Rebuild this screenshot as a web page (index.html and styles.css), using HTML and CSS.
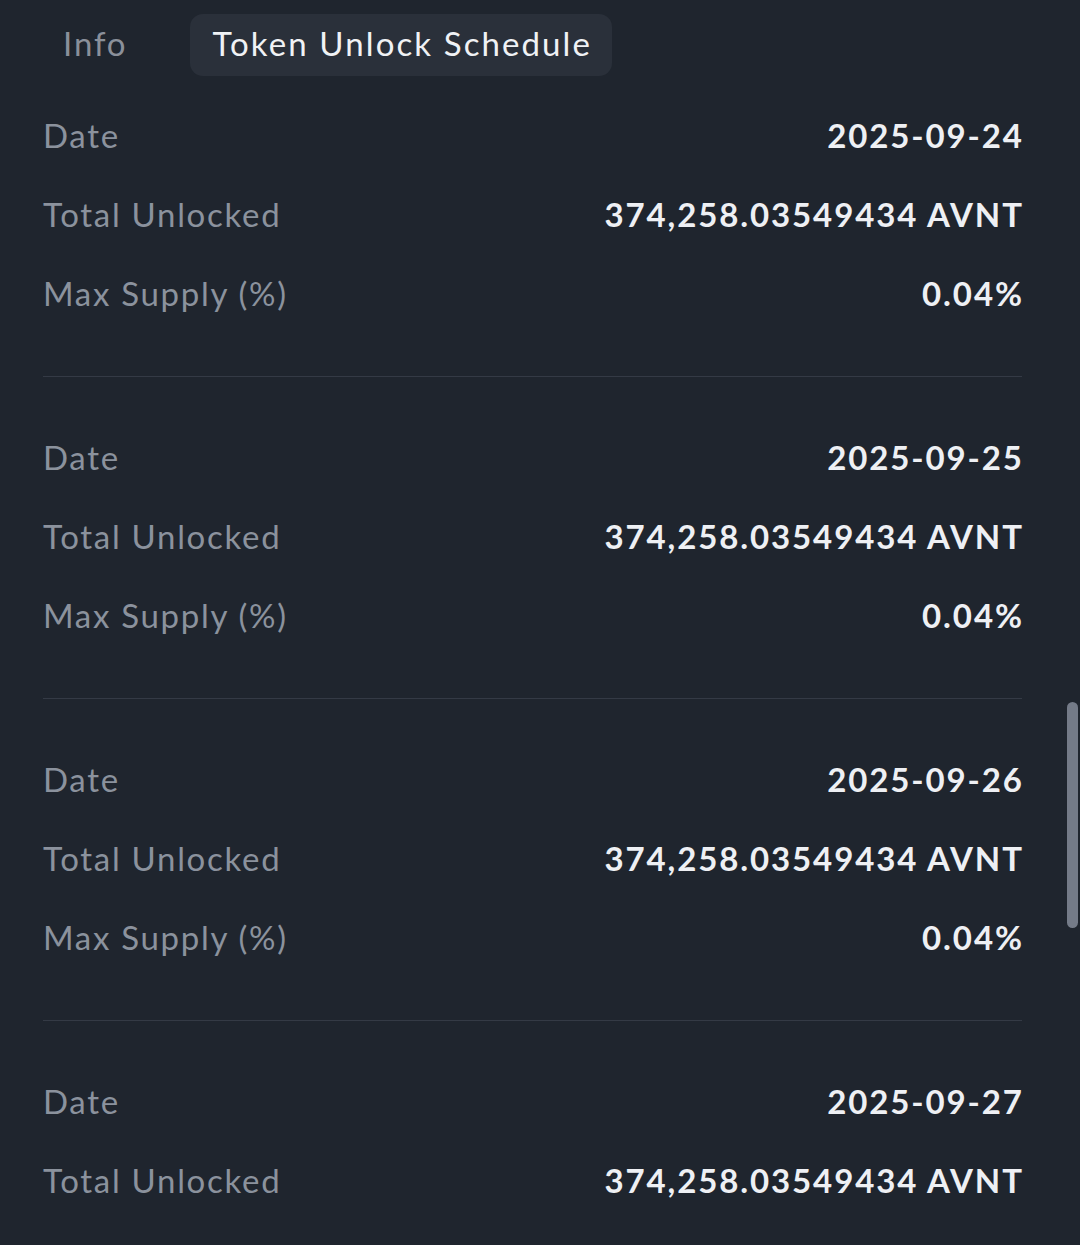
FILE: index.html
```html
<!DOCTYPE html>
<html>
<head>
<meta charset="utf-8">
<link rel="stylesheet" href="styles.css">
</head>
<body>
<div class="page">
  <nav class="tabs">
    <div class="tab">Info</div>
    <div class="tab active">Token Unlock Schedule</div>
  </nav>
  <div class="list">
    <section class="group">
      <div class="row"><span class="label">Date</span><span class="value">2025-09-24</span></div>
      <div class="row"><span class="label">Total Unlocked</span><span class="value">374,258.03549434 AVNT</span></div>
      <div class="row"><span class="label">Max Supply (%)</span><span class="value">0.04%</span></div>
    </section>
    <section class="group">
      <div class="row"><span class="label">Date</span><span class="value">2025-09-25</span></div>
      <div class="row"><span class="label">Total Unlocked</span><span class="value">374,258.03549434 AVNT</span></div>
      <div class="row"><span class="label">Max Supply (%)</span><span class="value">0.04%</span></div>
    </section>
    <section class="group">
      <div class="row"><span class="label">Date</span><span class="value">2025-09-26</span></div>
      <div class="row"><span class="label">Total Unlocked</span><span class="value">374,258.03549434 AVNT</span></div>
      <div class="row"><span class="label">Max Supply (%)</span><span class="value">0.04%</span></div>
    </section>
    <section class="group">
      <div class="row"><span class="label">Date</span><span class="value">2025-09-27</span></div>
      <div class="row"><span class="label">Total Unlocked</span><span class="value">374,258.03549434 AVNT</span></div>
    </section>
  </div>
  <div class="scrollbar"></div>
</div>
</body>
</html>
```

FILE: styles.css
```css
html, body {
  margin: 0;
  padding: 0;
  background: #1f252e;
  overflow: hidden;
}
.page {
  width: 1080px;
  height: 1245px;
  font-family: Lato, "Noto Sans", sans-serif;
  background: #1f252e;
  overflow: hidden;
}
.tabs {
  display: flex;
  align-items: center;
  gap: 42px;
  padding: 14px 0 0 42px;
}
.tab {
  box-sizing: border-box;
  height: 62px;
  line-height: 58px;
  padding: 0 21px 4px;
  font-size: 33px;
  letter-spacing: 1.9px;
  color: #8a909a;
  border-radius: 13px;
}
.tab.active {
  background: #2a303a;
  color: #f0f2f5;
  padding: 0 20px 4px 22px;
  letter-spacing: 2.1px;
}
.list {
  margin: 21px 58px 0 43px;
}
.group {
  padding: 42px 0;
  border-bottom: 1px solid #343a45;
}
.group:first-child {
  padding-top: 0;
}
.group:last-child {
  border-bottom: none;
  padding-bottom: 0;
}
.row {
  box-sizing: border-box;
  display: flex;
  justify-content: space-between;
  align-items: center;
  height: 79px;
  padding-bottom: 4px;
  font-size: 33px;
}
.label {
  color: #8b929d;
  letter-spacing: 1.7px;
}
.value {
  color: #eef0f4;
  font-weight: 700;
  letter-spacing: 1.9px;
  margin-right: -1.9px;
}
.scrollbar {
  position: fixed;
  top: 702px;
  right: 2px;
  width: 11px;
  height: 226px;
  border-radius: 6px;
  background: #747b88;
}
```
